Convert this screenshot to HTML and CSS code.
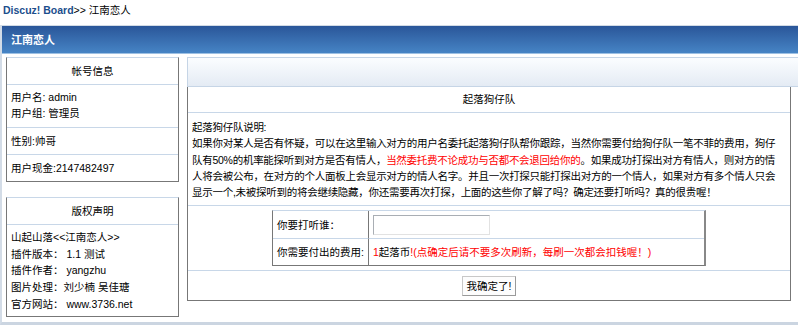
FILE: index.html
```html
<!DOCTYPE html>
<html lang="zh-CN">
<head>
<meta charset="utf-8">
<title>江南恋人</title>
<link rel="stylesheet" href="styles.css">
</head>
<body>
<div class="crumb"><a class="crumb-home" href="#">Discuz! Board</a>&gt;&gt; 江南恋人</div>
<div class="frame">
  <div class="frame-title">江南恋人</div>
  <div class="frame-body">
    <aside class="side">
      <div class="box">
        <div class="box-head">帐号信息</div>
        <div class="box-row two">用户名: admin<br>用户组: 管理员</div>
        <div class="box-row">性别:帅哥</div>
        <div class="box-row">用户现金:2147482497</div>
      </div>
      <div class="box">
        <div class="box-head">版权声明</div>
        <div class="box-row list">山起山落&lt;&lt;江南恋人&gt;&gt;<br>插件版本： 1.1 测试<br>插件作者： yangzhu<br>图片处理：刘少楠 吴佳瑭<br>官方网站： www.3736.net</div>
      </div>
    </aside>
    <main class="main">
      <div class="main-bar"></div>
      <div class="panel">
        <div class="panel-head">起落狗仔队</div>
        <div class="panel-text">起落狗仔队说明:<br>如果你对某人是否有怀疑，可以在这里输入对方的用户名委托起落狗仔队帮你跟踪，当然你需要付给狗仔队一笔不菲的费用，狗仔<br>队有50%的机率能探听到对方是否有情人，<span class="red">当然委托费不论成功与否都不会退回给你的</span>。如果成功打探出对方有情人，则对方的情<br>人将会被公布，在对方的个人面板上会显示对方的情人名字。并且一次打探只能打探出对方的一个情人，如果对方有多个情人只会<br>显示一个,未被探听到的将会继续隐藏，你还需要再次打探，上面的这些你了解了吗？确定还要打听吗？真的很贵喔！</div>
        <div class="panel-form">
          <table class="ask">
            <tr class="ask-row1">
              <td class="ask-label">你要打听谁：</td>
              <td class="ask-value"><input class="ask-input" type="text"></td>
            </tr>
            <tr class="ask-row2">
              <td class="ask-label">你需要付出的费用:</td>
              <td class="ask-value"><span class="red">1</span>起落币<span class="red">!(点确定后请不要多次刷新，每刷一次都会扣钱喔！)</span></td>
            </tr>
          </table>
        </div>
        <div class="panel-actions"><button class="btn" type="button">我确定了!</button></div>
      </div>
    </main>
  </div>
</div>
</body>
</html>
```
FILE: styles.css
```css
* { box-sizing: border-box; }
html, body { margin: 0; background: #fff; }
body {
  font-family: "Liberation Sans", "Noto Sans CJK SC", sans-serif;
  font-size: 10.5px;
  line-height: 16px;
  color: #000;
  overflow: hidden;
}
.red { color: #f00; }

.crumb { height: 25px; padding: 2px 0 0 3px; }
.crumb-home { color: #1b4e8c; font-weight: bold; text-decoration: none; }

.frame {
  border-top: 1px solid #d2dbe5;
  border-left: 2px solid #d3dce7;
  border-bottom: 3px solid #cbd5e1;
}
.frame-title {
  height: 28px;
  padding-left: 9px;
  line-height: 28px;
  color: #fff;
  font-weight: bold;
  font-size: 11px;
  background: linear-gradient(#2a5699, #4684c5);
  border-bottom: 1px solid #9dc0e3;
}
.frame-body {
  display: flex;
  align-items: flex-start;
  gap: 8px;
  padding: 3px 0 5px 4px;
}

.side { width: 173px; flex: none; }
.box {
  border: 1px solid #777;
  border-top-color: #c8d7e8;
}
.box + .box { margin-top: 15px; }
.box-head { height: 26px; padding: 5px 0; text-align: center; }
.box-row {
  border-top: 1px solid #c8d7e8;
  padding: 5px 4px;
  min-height: 27px;
}
.box-row.two { line-height: 15.6px; padding: 5.4px 4px; }
.box-row.list { line-height: 16.65px; padding: 4px 4px 3.75px; }

.main { flex: 1; min-width: 0; }
.main-bar {
  height: 30px;
  border: 1px solid #c6d5e6;
  border-right: none;
  background: linear-gradient(#fbfdff, #e4ebf4);
}
.panel {
  margin-right: 7px;
  border: 1px solid #777;
  border-top: none;
}
.panel-head {
  height: 26px;
  line-height: 25px;
  text-align: center;
  border-bottom: 1px solid #c8d7e8;
}
.panel-text {
  padding: 6px 4px 4.75px;
  line-height: 16.25px;
  letter-spacing: -0.27px;
  white-space: nowrap;
  border-bottom: 1px solid #c8d7e8;
}
.panel-form {
  padding: 4px 0;
  border-bottom: 1px solid #c8d7e8;
}
.ask {
  width: 434px;
  margin: 0 auto;
  border-spacing: 0;
  border-top: 1px solid #c8d7e8;
  border-left: 1px solid #777;
  border-right: 2px solid #888;
  border-bottom: 1px solid #777;
}
.ask td { padding: 0 4px; white-space: nowrap; }
.ask-row1 td { height: 27px; }
.ask-row2 td { height: 27px; border-top: 1px solid #c8d7e8; }
.ask-label { width: 96px; border-right: 1px solid #777; }
.ask-input {
  display: block;
  width: 117px;
  height: 20px;
  margin: 0;
  padding: 0 2px;
  border: 1px solid #e2e2e2;
  border-top-color: #a9aeb4;
  border-left-color: #a9aeb4;
  background: #fff;
}
.panel-actions { padding: 5px 0 4px; text-align: center; }
.btn {
  display: inline-block;
  height: 20px;
  padding: 0 4px;
  margin: 0;
  font: inherit;
  line-height: 18px;
  color: #000;
  background: #fdfdfd;
  border: 1px solid #c8c8c8;
  border-right-color: #9a9a9a;
  border-bottom-color: #9a9a9a;
  border-radius: 0;
}
```
